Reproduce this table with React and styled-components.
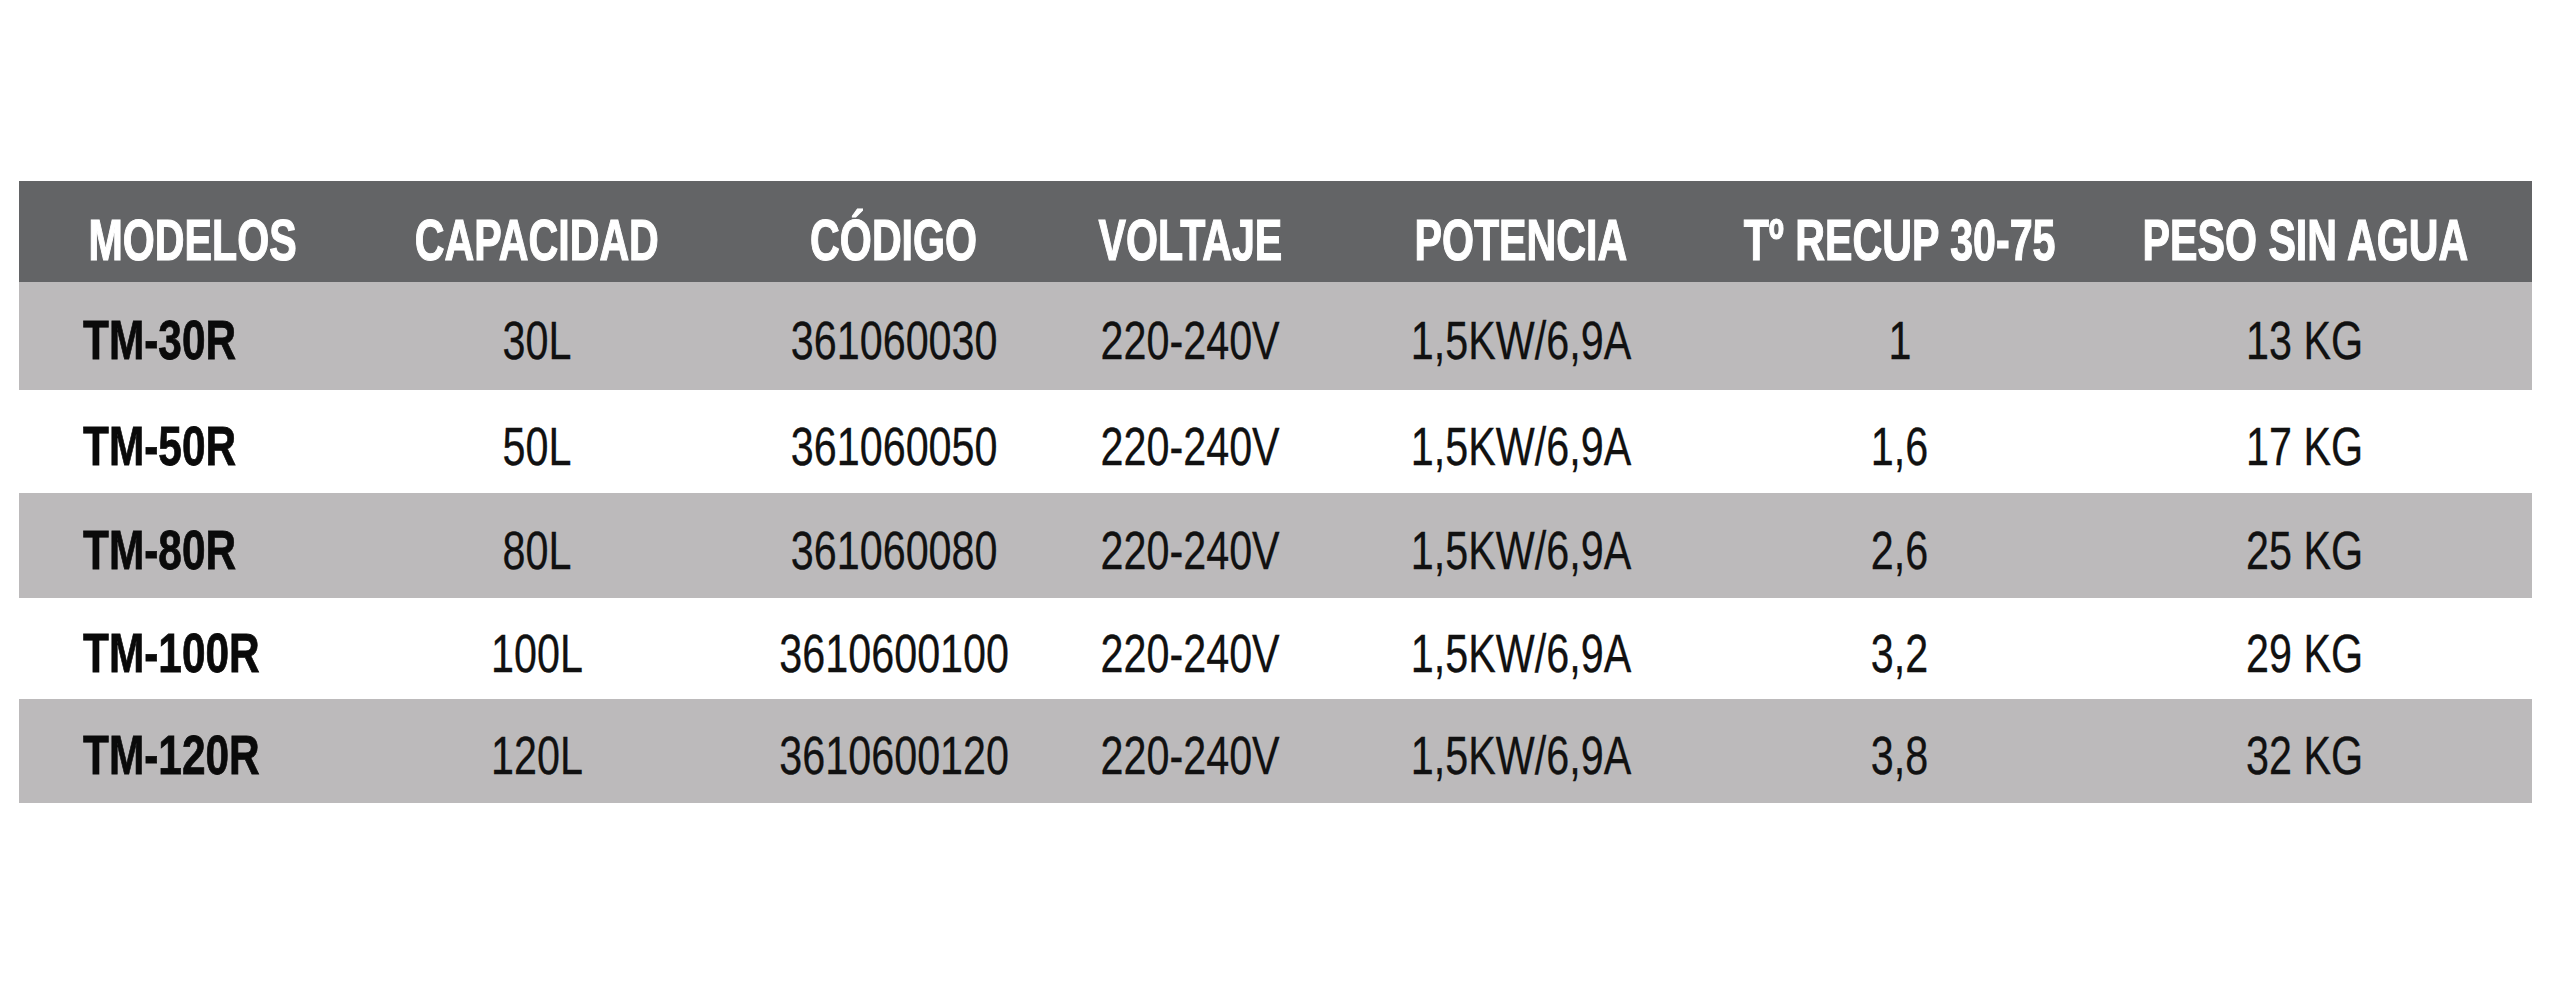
import React from "react";
import styled, { createGlobalStyle } from "styled-components";

const GlobalStyle = createGlobalStyle`
  html, body {
    margin: 0;
    padding: 0;
    background: #ffffff;
  }
  body {
    font-family: "Liberation Sans", Arial, sans-serif;
  }
`;

const Page = styled.div`
  width: 2560px;
  height: 1001px;
  padding: 181px 28px 0 19px;
  box-sizing: border-box;
  background: #ffffff;
`;

const Table = styled.div`
  display: flex;
  flex-direction: column;
  width: 2513px;
`;

const COLS = "347px 342px 372px 220px 442px 316px 474px";

const Row = styled.div`
  display: grid;
  grid-template-columns: ${COLS};
  height: ${(p) => p.$h}px;
  background: ${(p) => p.$bg};
`;

const Cell = styled.div`
  display: flex;
  align-items: center;
  justify-content: ${(p) => (p.$left ? "flex-start" : "center")};
  padding-top: ${(p) => p.$padTop}px;
  padding-left: ${(p) => p.$padLeft || 0}px;
  box-sizing: border-box;
  overflow: visible;
  white-space: nowrap;
`;

const HeadText = styled.span`
  display: inline-block;
  font-family: "Liberation Sans", Arial, sans-serif;
  font-weight: 700;
  font-size: 58px;
  line-height: 1;
  color: #ffffff;
  -webkit-text-stroke: 1.2px #ffffff;
  transform: scaleX(0.71);
  transform-origin: center;
`;

const ModelText = styled.span`
  display: inline-block;
  font-family: "Liberation Sans", Arial, sans-serif;
  font-weight: 700;
  font-size: 56px;
  line-height: 1;
  color: #0a0a0a;
  -webkit-text-stroke: 0.8px #0a0a0a;
  transform: scaleX(0.757);
  transform-origin: left center;
`;

const ValueText = styled.span`
  display: inline-block;
  font-family: "Liberation Sans", Arial, sans-serif;
  font-weight: 400;
  font-size: 54px;
  line-height: 1;
  color: #111111;
  -webkit-text-stroke: 0.3px #111111;
  transform: scaleX(0.765);
  transform-origin: center;
`;

const headers = [
  "MODELOS",
  "CAPACIDAD",
  "CÓDIGO",
  "VOLTAJE",
  "POTENCIA",
  "Tº RECUP 30-75",
  "PESO SIN AGUA",
];

const rows = [
  { h: 108, cells: ["TM-30R", "30L", "361060030", "220-240V", "1,5KW/6,9A", "1", "13 KG"] },
  { h: 103, cells: ["TM-50R", "50L", "361060050", "220-240V", "1,5KW/6,9A", "1,6", "17 KG"] },
  { h: 105, cells: ["TM-80R", "80L", "361060080", "220-240V", "1,5KW/6,9A", "2,6", "25 KG"] },
  { h: 101, cells: ["TM-100R", "100L", "3610600100", "220-240V", "1,5KW/6,9A", "3,2", "29 KG"] },
  { h: 104, cells: ["TM-120R", "120L", "3610600120", "220-240V", "1,5KW/6,9A", "3,8", "32 KG"] },
];

export default function App() {
  return (
    <>
      <GlobalStyle />
      <Page>
        <Table>
          <Row $h={101} $bg="#636466">
            {headers.map((h, i) => (
              <Cell key={h} $padTop={16} $padLeft={i === 6 ? 20 : 0}>
                <HeadText>{h}</HeadText>
              </Cell>
            ))}
          </Row>
          {rows.map((r, ri) => (
            <Row key={r.cells[0]} $h={r.h} $bg={ri % 2 === 0 ? "#bcbabb" : "#ffffff"}>
              {r.cells.map((c, ci) =>
                ci === 0 ? (
                  <Cell key={ci} $left $padTop={8} $padLeft={64}>
                    <ModelText>{c}</ModelText>
                  </Cell>
                ) : (
                  <Cell key={ci} $padTop={8} $padLeft={ci === 6 ? 20 : 0}>
                    <ValueText>{c}</ValueText>
                  </Cell>
                )
              )}
            </Row>
          ))}
        </Table>
      </Page>
    </>
  );
}
